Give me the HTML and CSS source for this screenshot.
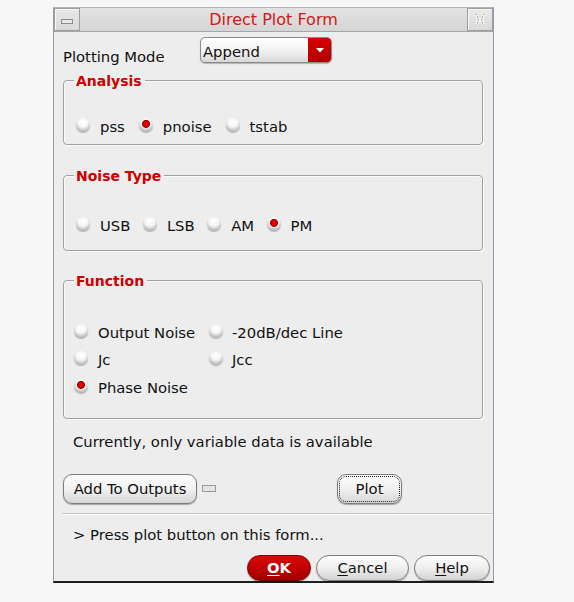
FILE: index.html
```html
<!DOCTYPE html>
<html>
<head>
<meta charset="utf-8">
<title>Direct Plot Form</title>
<link rel="stylesheet" href="styles.css">
</head>
<body>
<div class="window">
  <div class="titlebar">
    <div class="tb-btn"><span class="min-dash"></span></div>
    <div class="title">Direct Plot Form</div>
    <div class="tb-btn tb-close">
      <svg width="14" height="15" viewBox="0 0 14 15">
        <path d="M2.5 1.5 Q8 7.5 2.5 13.5 M11.5 1.5 Q6 7.5 11.5 13.5" fill="none" stroke="#fafafa" stroke-width="3"/>
        <path d="M2.5 1.5 Q8 7.5 2.5 13.5 M11.5 1.5 Q6 7.5 11.5 13.5" fill="none" stroke="#a2a2a2" stroke-width="1.1" stroke-dasharray="2 1"/>
      </svg>
    </div>
  </div>
  <div class="content">
    <div class="mode-row">
      <span class="mode-label">Plotting Mode</span>
      <div class="combo">
        <span class="combo-text">Append</span>
        <span class="combo-arrow"><svg width="8" height="5" viewBox="0 0 8 5"><path d="M0 0 H8 L4 4.5 Z" fill="#ffffff"/></svg></span>
      </div>
    </div>

    <div class="group g-analysis">
      <span class="legend">Analysis</span>
      <div class="radio-row">
        <span class="opt"><span class="radio"></span>pss</span>
        <span class="opt"><span class="radio on"></span>pnoise</span>
        <span class="opt"><span class="radio"></span>tstab</span>
      </div>
    </div>

    <div class="group g-noise">
      <span class="legend">Noise Type</span>
      <div class="radio-row tight">
        <span class="opt"><span class="radio"></span>USB</span>
        <span class="opt"><span class="radio"></span>LSB</span>
        <span class="opt"><span class="radio"></span>AM</span>
        <span class="opt"><span class="radio on"></span>PM</span>
      </div>
    </div>

    <div class="group g-func">
      <span class="legend">Function</span>
      <div class="func-grid">
        <span class="opt"><span class="radio"></span>Output Noise</span>
        <span class="opt"><span class="radio"></span>-20dB/dec Line</span>
        <span class="opt"><span class="radio"></span>Jc</span>
        <span class="opt"><span class="radio"></span>Jcc</span>
        <span class="opt"><span class="radio on"></span>Phase Noise</span>
      </div>
    </div>

    <div class="info">Currently, only variable data is available</div>

    <div class="action-row">
      <button class="btn btn-add">Add To Outputs</button>
      <span class="indicator"></span>
      <button class="btn btn-plot">Plot</button>
    </div>

    <div class="separator"></div>

    <div class="status">&gt; Press plot button on this form...</div>

    <div class="footer">
      <button class="pill pill-ok"><u>O</u>K</button>
      <button class="pill pill-cancel"><u>C</u>ancel</button>
      <button class="pill pill-help"><u>H</u>elp</button>
    </div>
  </div>
</div>
</body>
</html>
```

FILE: styles.css
```css
* { box-sizing: border-box; }
html, body { margin: 0; padding: 0; }
body {
  background: #f7f7f7;
  font-family: "DejaVu Sans", Verdana, sans-serif;
  font-size: 14.8px;
  color: #111;
}

.window {
  width: 441px;
  height: 576px;
  margin: 7px 0 0 53px;
  background: #ededed;
  border: 1px solid #8e9bb0;
  border-top-color: #b4b4b4;
  border-bottom: 2px solid #1e1e1e;
  box-shadow: 0 1px 0 #b5c3d8;
  display: flex;
  flex-direction: column;
}

.titlebar {
  height: 24px;
  display: flex;
  background: linear-gradient(#e3e3e3, #d5d5d5);
  border-bottom: 1px solid #a6a6a6;
}
.tb-btn {
  width: 26px;
  display: flex;
  align-items: center;
  justify-content: center;
  border: 1px solid #9e9e9e;
  background: linear-gradient(#e9e9e9, #d9d9d9);
  box-shadow: inset 1px 1px 0 #f7f7f7;
}
.min-dash {
  width: 12px;
  height: 5px;
  margin-top: 4px;
  border: 1px solid #8c8c8c;
  background: #e8e8e8;
}
.title {
  flex: 1;
  text-align: center;
  color: #d01818;
  font-size: 16px;
  line-height: 23px;
}

.content {
  flex: 1;
  padding: 0 10px 0 9px;
  display: flex;
  flex-direction: column;
}

.mode-row {
  display: flex;
  height: 26px;
  margin-top: 5px;
}
.mode-label {
  width: 137px;
  margin-top: 11px;
  line-height: 18px;
}
.combo {
  width: 132px;
  height: 26px;
  display: flex;
  border: 1px solid #8a8a8a;
  border-radius: 5px;
  overflow: hidden;
  background: linear-gradient(#ffffff, #f2f2f2 55%, #d8d8d8);
  box-shadow: 0 1px 1px rgba(0,0,0,0.25);
}
.combo-text {
  flex: 1;
  padding: 3px 0 0 2px;
  line-height: 21px;
}
.combo-arrow {
  width: 23px;
  display: flex;
  align-items: center;
  justify-content: center;
  background: linear-gradient(#d80000, #b00000);
}

.group {
  position: relative;
  border: 1px solid #a2a2a2;
  border-radius: 4px;
  box-shadow: inset 1px 1px 0 #fafafa, 1px 1px 0 #fafafa;
}
.legend {
  position: absolute;
  left: 10px;
  top: -8px;
  padding: 0 3px 0 2px;
  background: #ededed;
  color: #cc0000;
  font-weight: bold;
  font-size: 14px;
  line-height: 16px;
}
.g-analysis { margin-top: 17px; padding: 36px 0 7px 12px; }
.g-noise { margin-top: 30px; padding: 40px 0 14px 12px; }
.g-func { margin-top: 29px; padding: 38px 0 16px 10px; }

.radio-row {
  display: flex;
  gap: 14px;
  height: 20px;
}
.radio-row.tight { gap: 12.5px; }
.opt {
  display: flex;
  align-items: center;
  gap: 10px;
  line-height: 20px;
  white-space: nowrap;
}
.radio {
  width: 14px;
  height: 14px;
  margin-bottom: 4px;
  border-radius: 50%;
  background: radial-gradient(circle at 50% 30%, #ffffff 0, #f6f6f6 40%, #c6c6c6 68%, #808080 100%);
  box-shadow: 0 1px 1px rgba(0,0,0,0.25);
}
.radio.on {
  background:
    radial-gradient(circle at 50% 42%, #ee0000 0, #c80000 3px, #9a0000 3.6px, rgba(255,255,255,0) 4.4px),
    radial-gradient(circle at 50% 30%, #ffffff 0, #f6f6f6 40%, #c6c6c6 68%, #7c7c7c 100%);
}

.func-grid {
  display: grid;
  grid-template-columns: 135px auto;
  grid-auto-rows: 27.5px;
}
.func-grid .opt { gap: 9px; }
.func-grid .opt:nth-child(odd) { gap: 10px; }

.info {
  margin-top: 14px;
  padding-left: 10px;
  line-height: 18px;
}

.action-row {
  display: flex;
  align-items: center;
  margin-top: 23px;
  height: 30px;
}
.btn {
  font-family: inherit;
  font-size: 14.8px;
  color: #111;
  height: 30px;
  padding: 0;
  border: 1px solid #7c7c7c;
  border-radius: 9px;
  background: linear-gradient(#fdfdfd, #f1f1f1 50%, #d6d6d6);
  box-shadow: 0 1px 1px rgba(0,0,0,0.3);
}
.btn-add { width: 134px; }
.indicator {
  width: 14px;
  height: 7px;
  margin-left: 5px;
  border: 1px solid #9a9a9a;
  background: #e4e4e4;
}
.btn-plot {
  width: 65px;
  margin-left: 121px;
  outline: 1px dotted #222;
  outline-offset: -3px;
}

.separator {
  margin: 9px -10px 0 -1px;
  height: 2px;
  border-top: 1px solid #c6c6c6;
  border-bottom: 1px solid #fbfbfb;
}

.status {
  margin-top: 11px;
  padding-left: 10px;
  line-height: 18px;
}

.footer {
  display: flex;
  justify-content: flex-end;
  gap: 5px;
  margin: 11px -7px 0 0;
  height: 26px;
}
.pill {
  font-family: inherit;
  font-size: 14.8px;
  color: #111;
  height: 26px;
  padding: 0;
  border: 1px solid #7e7e7e;
  border-radius: 13px;
  background: linear-gradient(#fdfdfd, #efefef 50%, #d2d2d2);
  box-shadow: 0 1px 1px rgba(0,0,0,0.3);
}
.pill u { text-underline-offset: 2px; }
.pill-ok {
  width: 64px;
  color: #ffffff;
  font-weight: bold;
  border-color: #7a0000;
  background: linear-gradient(#dc0a0a, #c00000 50%, #a00000);
}
.pill-cancel { width: 93px; }
.pill-help { width: 76px; }
```
